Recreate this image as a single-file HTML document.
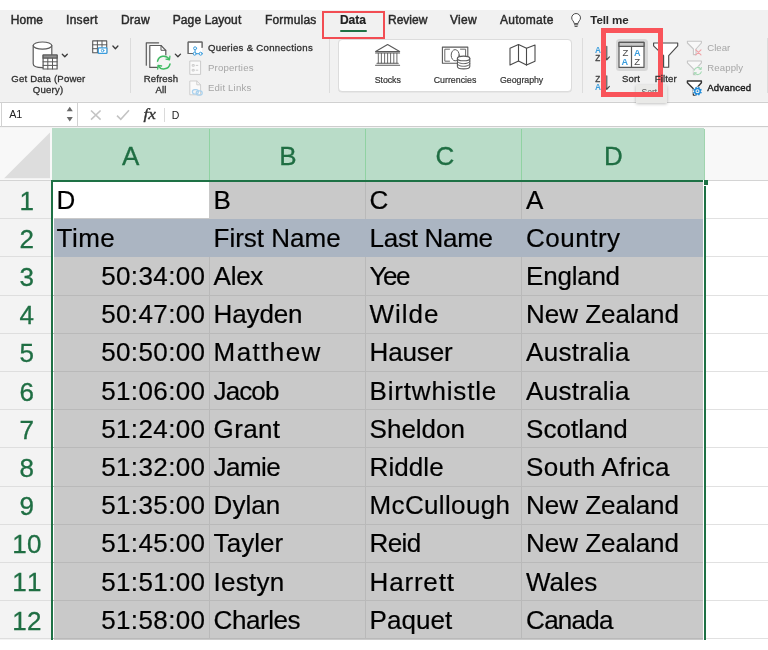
<!DOCTYPE html>
<html><head><meta charset="utf-8"><title>Excel Sort</title>
<style>
html,body{margin:0;padding:0;background:#fff;}
body{width:768px;height:650px;position:relative;overflow:hidden;font-family:"Liberation Sans",sans-serif;}
.t{position:absolute;white-space:nowrap;}
.a{position:absolute;}
svg{position:absolute;overflow:visible;}
</style></head><body><div id="wrap" style="position:absolute;left:0;top:0;width:768px;height:650px;will-change:transform;">
<!-- ribbon background -->
<div class="a" style="left:0;top:10px;width:768px;height:91.5px;background:#f1f1f1;"></div>
<!-- separators -->
<div class="a" style="left:130px;top:38px;width:1px;height:55px;background:#dcdcdc;"></div>
<div class="a" style="left:328.5px;top:38px;width:1px;height:55px;background:#dcdcdc;"></div>
<div class="a" style="left:582px;top:38px;width:1px;height:55px;background:#dcdcdc;"></div>
<div class="a" style="left:767px;top:38px;width:1px;height:55px;background:#dcdcdc;"></div>
<!-- data types panel -->
<div class="a" style="left:338.2px;top:39.2px;width:233.8px;height:52.8px;background:#fff;border:0.8px solid #dcdcdc;box-shadow:0 0.5px 0.6px rgba(0,0,0,.08);border-radius:4px;box-sizing:border-box;"></div>
<!-- data underline -->
<div class="a" style="left:340px;top:30px;width:27px;height:2.2px;background:#1e7145;border-radius:1px;"></div>
<!-- sort button bg -->
<div class="a" style="left:615.5px;top:38.7px;width:32.3px;height:32px;background:#d8d8d8;border-radius:3.5px;"></div>

<!--ICONS_START-->
<svg style="left:0;top:0" width="768" height="110" viewBox="0 0 768 110" fill="none" stroke-linejoin="round" stroke-linecap="round">
<!-- Get Data: cylinder + table -->
<g stroke="#5a5a5a" stroke-width="1.2">
 <path d="M33.2 45.6 V63.8 C33.2 66.2 37.3 67.6 42.5 67.6 C47.7 67.6 51.8 66.2 51.8 63.8 V45.6" fill="#fff"/>
 <ellipse cx="42.5" cy="45.6" rx="9.3" ry="3.6" fill="#fff"/>
 <rect x="43.1" y="55" width="14" height="14" fill="#fff"/>
 <rect x="43.1" y="55" width="14" height="3.2" fill="#8f8f8f"/>
 <path d="M43.1 61.8 H57.1 M43.1 65.4 H57.1 M47.8 58.2 V69 M52.5 58.2 V69" stroke-width="1"/>
</g>
<path d="M62.3 54.2 L64.8 56.8 L67.3 54.2" stroke="#3a3a3a" stroke-width="1.3"/>
<!-- table + camera -->
<g stroke="#5a5a5a" stroke-width="1.1">
 <rect x="92.7" y="40.9" width="14" height="11.8" fill="#fff"/>
 <path d="M92.7 44.8 H106.7 M92.7 48.7 H106.7 M97.4 40.9 V52.7 M102 40.9 V52.7" stroke-width="1"/>
</g>
<rect x="98.3" y="47.8" width="8.6" height="5.6" rx="0.6" fill="#fff" stroke="#3b9ddd" stroke-width="1.2"/>
<circle cx="102.6" cy="50.6" r="1.3" stroke="#3b9ddd" stroke-width="0.9"/>
<path d="M112.9 46 L115.4 48.7 L117.9 46" stroke="#3a3a3a" stroke-width="1.3"/>
<!-- Refresh all -->
<g stroke="#5a5a5a" stroke-width="1.2">
 <path d="M158.6 42.8 H146.3 V65.2"/>
 <path d="M149.8 45.5 H161 L165.8 50.3 V67.4 H149.8 Z" fill="#fff"/>
 <path d="M161 45.5 V50.3 H165.8" stroke-width="1"/>
</g>
<circle cx="163.8" cy="62.6" r="7.6" fill="#f4f4f4" stroke="none"/>
<g stroke="#3fbb63" stroke-width="1.5">
 <path d="M157.6 61.2 A6.3 6.3 0 0 1 169.2 59.4"/>
 <path d="M170 64 A6.3 6.3 0 0 1 158.4 65.8"/>
 <path d="M169.9 56.2 L169.5 59.8 L166 59.2" stroke-width="1.3"/>
 <path d="M157.7 69 L158.1 65.4 L161.6 66" stroke-width="1.3"/>
</g>
<path d="M175.3 54.1 L177.9 56.8 L180.5 54.1" stroke="#3a3a3a" stroke-width="1.3"/>
<!-- Queries & connections -->
<path d="M194 53.5 H188.2 V42.2 H202 V47" stroke="#666" stroke-width="1.2" fill="#fff"/>
<path d="M188.2 42.2 H202 V53 H188.2 Z" fill="#fff" stroke="none"/>
<path d="M192 53.5 H188.2 V42.2 H202 V47.5" stroke="#666" stroke-width="1.2"/>
<g stroke="#3b9ddd" stroke-width="1">
 <path d="M195.1 49.8 V52.2 M196.2 53.7 H199.2"/>
 <circle cx="195.1" cy="48.3" r="1.5" fill="#fff"/>
 <circle cx="194.7" cy="53.7" r="1.5" fill="#fff"/>
 <circle cx="200.7" cy="53.7" r="1.5" fill="#fff"/>
</g>
<!-- Properties -->
<g stroke="#cbcbcb" stroke-width="1">
 <rect x="190.2" y="61" width="10.4" height="13.4" fill="#fafafa"/>
 <rect x="192.6" y="64.6" width="1.6" height="1.6"/>
 <rect x="192.6" y="69.4" width="1.6" height="1.6"/>
 <path d="M196.2 65.4 H197.8 M196.2 70.2 H197.8"/>
</g>
<!-- Edit links -->
<g stroke="#cfcfcf" stroke-width="1">
 <path d="M190.2 81 H196.8 L200.6 84.8 V94.8 H190.2 Z" fill="#fafafa"/>
 <path d="M196.8 81 V84.8 H200.6"/>
</g>
<g stroke="#a9d1ee" stroke-width="1.2">
 <rect x="192.4" y="89.6" width="6" height="4.4" rx="2.2" fill="#f4f4f4"/>
 <rect x="196.2" y="90.8" width="6" height="4.4" rx="2.2"/>
</g>
<!-- Stocks (bank) -->
<g stroke="#5a5a5a" stroke-width="1.1">
 <path d="M375.6 51.6 L387.6 44.6 L399.6 51.6 Z" fill="#fff"/>
 <path d="M375.6 53 H399.6" />
 <path d="M378.3 53.4 V63 M381.4 53.4 V63 M384.6 53.4 V63 M387.6 53.4 V63 M390.6 53.4 V63 M393.8 53.4 V63 M396.9 53.4 V63" stroke-width="0.9"/>
 <path d="M377 63.2 H398.2 M375.6 65.3 H399.6"/>
</g>
<!-- Currencies -->
<g stroke="#5a5a5a" stroke-width="1.1">
 <rect x="442.4" y="47.1" width="25.4" height="16.2" fill="#fff"/>
 <path d="M449.5 49.2 H444.8 V61.2 H449.5 M460.5 49.2 H465.6 V56.5 M460.5 61.2 H458" stroke-width="0.9"/>
 <ellipse cx="455.2" cy="55.2" rx="4" ry="5.6" stroke-width="1"/>
 <path d="M457.4 58.4 V66.4 C457.4 67.8 460.2 68.9 463.6 68.9 C467 68.9 469.8 67.8 469.8 66.4 V58.4" fill="#fff"/>
 <ellipse cx="463.6" cy="58.4" rx="6.2" ry="2.3" fill="#fff"/>
 <path d="M457.4 61.1 C457.4 62.5 460.2 63.6 463.6 63.6 C467 63.6 469.8 62.5 469.8 61.1 M457.4 63.8 C457.4 65.2 460.2 66.3 463.6 66.3 C467 66.3 469.8 65.2 469.8 63.8" stroke-width="1"/>
</g>
<!-- Geography -->
<g stroke="#4a4a4a" stroke-width="1.1">
 <path d="M510 48.3 L518.5 44.5 L526.5 48.3 L535 45 V61.2 L526.5 65.1 L518.5 61 L510 65.1 Z" fill="#fff"/>
 <path d="M518.5 44.5 V61 M526.5 48.3 V65.1"/>
</g>
<!-- bulb -->
<g stroke="#4a4a4a" stroke-width="1">
 <path d="M574.2 23.2 C574 21.2 571.7 20.4 571.7 17.9 A4.4 4.4 0 0 1 580.5 17.9 C580.5 20.4 578.2 21.2 578 23.2 Z" fill="#fff"/>
 <path d="M574.4 24.8 H577.8 M575 26.4 H577.2"/>
</g>
<!-- AZ sort arrows -->
<g font-family="Liberation Sans, sans-serif" font-size="8.2" stroke="none">
 <text x="594.9" y="52.6" fill="#3b9ddd" font-weight="bold">A</text>
 <text x="595.3" y="60.8" fill="#444" stroke="#444" stroke-width="0.3">Z</text>
 <text x="595.3" y="81.7" fill="#444" stroke="#444" stroke-width="0.3">Z</text>
 <text x="594.9" y="89.6" fill="#3b9ddd" font-weight="bold">A</text>
</g>
<g stroke="#4a4a4a" stroke-width="1.1">
 <path d="M606.8 46.4 V59.6 M604.2 56.8 L606.8 59.8 L609.4 56.8"/>
 <path d="M606.8 75.8 V89.2 M604.2 86.4 L606.8 89.4 L609.4 86.4"/>
</g>
<!-- Sort icon -->
<g stroke="#5a5a5a" stroke-width="1.2">
 <rect x="619" y="42.4" width="25" height="25" fill="#fff"/>
 <rect x="619" y="42.4" width="25" height="4" fill="#c9c9c9"/>
 <path d="M631.5 46.4 V67.4"/>
</g>
<g font-family="Liberation Sans, sans-serif" font-size="9.6" stroke="none">
 <text x="622.4" y="55.7" fill="#4d4d4d">Z</text>
 <text x="634" y="55.7" fill="#3b9ddd" font-weight="bold" textLength="6.6" lengthAdjust="spacingAndGlyphs">A</text>
 <text x="621.4" y="64.9" fill="#3b9ddd" font-weight="bold" textLength="6.6" lengthAdjust="spacingAndGlyphs">A</text>
 <text x="634.3" y="64.9" fill="#4d4d4d">Z</text>
</g>
<!-- Filter funnel -->
<path d="M653.6 43 H677.7 V45.8 L668.7 55.6 V67.2 H663.6 V55.6 L653.6 45.8 Z" fill="#fff" stroke="#4a4a4a" stroke-width="1.15"/>
<!-- Clear -->
<path d="M687.4 41.2 H701.4 V43 L696 49 V54.6 H693.4 V49 L687.4 43 Z" fill="#f8f8f8" stroke="#c6c6c6" stroke-width="1.1"/>
<path d="M695.8 49.9 L701 54.8 M701 49.9 L695.8 54.8" stroke="#f1a1a6" stroke-width="1.1"/>
<!-- Reapply -->
<path d="M687.4 61 H701.4 V62.8 L696 68.8 V74.6 H693.4 V68.8 L687.4 62.8 Z" fill="#f8f8f8" stroke="#c6c6c6" stroke-width="1.1"/>
<circle cx="697.8" cy="71" r="4.4" fill="#f4f4f4" stroke="none"/>
<g stroke="#a4d9b3" stroke-width="1.1">
 <path d="M694.3 70.2 A3.6 3.6 0 0 1 700.9 69.2 M701.3 71.8 A3.6 3.6 0 0 1 694.7 72.8"/>
 <path d="M701.4 67.4 L701.1 69.5 L699 69.1 M694.2 74.6 L694.5 72.5 L696.6 72.9" stroke-width="0.9"/>
</g>
<!-- Advanced -->
<path d="M687.4 81 H701.4 V82.8 L696 88.8 V95 H693.4 V88.8 L687.4 82.8 Z" fill="#fff" stroke="#333" stroke-width="1.4"/>
<circle cx="697.5" cy="91.2" r="4.6" fill="#f4f4f4" stroke="none"/>
<g stroke="#1f8ad8" stroke-linecap="butt">
 <path d="M699.90 92.19 L701.57 92.88 M698.49 93.60 L699.18 95.27 M696.51 93.60 L695.82 95.27 M695.10 92.19 L693.43 92.88 M695.10 90.21 L693.43 89.52 M696.51 88.80 L695.82 87.13 M698.49 88.80 L699.18 87.13 M699.90 90.21 L701.57 89.52 " stroke-width="1.5"/>
 <circle cx="697.5" cy="91.2" r="2.7" stroke-width="1.3" fill="#f1f1f1"/>
 <circle cx="697.5" cy="91.2" r="0.9" fill="#1f8ad8" stroke="none"/>
</g>
</svg>

<!--ICONS_END-->

<!-- formula bar -->
<div class="a" style="left:0;top:101px;width:768px;height:27.5px;background:#f3f3f3;"></div>
<div class="a" style="left:0;top:101.6px;width:768px;height:25.8px;background:#fff;border-top:1.3px solid #d0d0d0;border-bottom:1.5px solid #cdcdcd;box-sizing:border-box;"></div>
<div class="a" style="left:76.5px;top:102px;width:1.4px;height:24.5px;background:#d2d2d2;"></div>
<div class="a" style="left:0.5px;top:102px;width:1px;height:24.5px;background:#d2d2d2;"></div>
<div class="a" style="left:164px;top:108px;width:1px;height:13.5px;background:#dadada;"></div>
<svg style="left:0;top:0" width="768" height="140" viewBox="0 0 768 140">
 <path d="M66.7 111.3 L69.75 106.7 L72.8 111.3 Z M66.7 116.9 L69.75 121.6 L72.8 116.9 Z" fill="#6a6a6a"/>
 <path d="M91 110.5 L100.6 119.6 M100.6 110.5 L91 119.6" stroke="#c4c4c4" stroke-width="1.6" fill="none"/>
 <path d="M117 115.6 L120.8 119.4 L129 110.3" stroke="#c4c4c4" stroke-width="1.6" fill="none"/>
 <text x="143.6" y="119.2" font-family="Liberation Serif,serif" font-style="italic" font-size="14.5" fill="#333" stroke="#333" stroke-width="0.35" textLength="12.4" lengthAdjust="spacingAndGlyphs">fx</text>
</svg>
<!-- tooltip -->
<div class="a" style="left:635.5px;top:85px;width:31.3px;height:17.5px;background:#e9e9e7;box-shadow:0 1px 3px rgba(0,0,0,.25);"></div>
<div class="t" style="left:641.5px;top:87px;font-size:8.5px;line-height:10px;color:#555;width:25px;overflow:hidden;">Sort</div>
<!-- red boxes -->
<div class="a" style="left:322.3px;top:10.8px;width:62.7px;height:27.8px;border:2.2px solid #f24d53;box-sizing:border-box;"></div>
<div class="a" style="left:600.8px;top:27.5px;width:62px;height:69.5px;border:5.2px solid #f9545a;box-sizing:border-box;"></div>

<div class="t" style="left:10.80px;top:14.04px;font-size:12px;line-height:12px;letter-spacing:0.053px;color:#2a2a2a;-webkit-text-stroke:0.45px #2a2a2a;">Home</div>
<div class="t" style="left:66.00px;top:14.04px;font-size:12px;line-height:12px;letter-spacing:0.300px;color:#2a2a2a;-webkit-text-stroke:0.45px #2a2a2a;">Insert</div>
<div class="t" style="left:121.00px;top:14.04px;font-size:12px;line-height:12px;letter-spacing:0.207px;color:#2a2a2a;-webkit-text-stroke:0.45px #2a2a2a;">Draw</div>
<div class="t" style="left:172.70px;top:14.04px;font-size:12px;line-height:12px;letter-spacing:0.116px;color:#2a2a2a;-webkit-text-stroke:0.45px #2a2a2a;">Page Layout</div>
<div class="t" style="left:265.00px;top:14.04px;font-size:12px;line-height:12px;letter-spacing:0.180px;color:#2a2a2a;-webkit-text-stroke:0.45px #2a2a2a;">Formulas</div>
<div class="t" style="left:388.00px;top:14.04px;font-size:12px;line-height:12px;letter-spacing:0.004px;color:#2a2a2a;-webkit-text-stroke:0.45px #2a2a2a;">Review</div>
<div class="t" style="left:450.00px;top:14.04px;font-size:12px;line-height:12px;letter-spacing:0.260px;color:#2a2a2a;-webkit-text-stroke:0.45px #2a2a2a;">View</div>
<div class="t" style="left:500.00px;top:14.04px;font-size:12px;line-height:12px;letter-spacing:0.277px;color:#2a2a2a;-webkit-text-stroke:0.45px #2a2a2a;">Automate</div>
<div class="t" style="left:590.30px;top:14.38px;font-size:11.6px;line-height:11.6px;letter-spacing:-0.115px;color:#2a2a2a;font-weight:bold;">Tell me</div>
<div class="t" style="left:340.00px;top:14.04px;font-size:12px;line-height:12px;letter-spacing:-0.053px;color:#222;font-weight:bold;-webkit-text-stroke:0.2px #222;">Data</div>
<div class="t" style="left:11.30px;top:74.47px;font-size:9.6px;line-height:9.6px;letter-spacing:0.177px;color:#303030;-webkit-text-stroke:0.3px #303030;">Get Data (Power</div>
<div class="t" style="left:32.80px;top:85.27px;font-size:9.6px;line-height:9.6px;letter-spacing:0.225px;color:#303030;-webkit-text-stroke:0.3px #303030;">Query)</div>
<div class="t" style="left:143.80px;top:74.37px;font-size:9.6px;line-height:9.6px;letter-spacing:0.100px;color:#303030;-webkit-text-stroke:0.3px #303030;">Refresh</div>
<div class="t" style="left:155.50px;top:85.17px;font-size:9.6px;line-height:9.6px;letter-spacing:0.072px;color:#303030;-webkit-text-stroke:0.3px #303030;">All</div>
<div class="t" style="left:208.00px;top:43.17px;font-size:9.6px;line-height:9.6px;letter-spacing:0.301px;color:#303030;-webkit-text-stroke:0.3px #303030;">Queries &amp; Connections</div>
<div class="t" style="left:208.00px;top:63.27px;font-size:9.6px;line-height:9.6px;letter-spacing:0.192px;color:#a6a6a6;">Properties</div>
<div class="t" style="left:208.00px;top:83.47px;font-size:9.6px;line-height:9.6px;letter-spacing:0.182px;color:#a6a6a6;">Edit Links</div>
<div class="t" style="left:374.70px;top:75.85px;font-size:8.8px;line-height:8.8px;letter-spacing:-0.060px;color:#333;-webkit-text-stroke:0.2px #333;">Stocks</div>
<div class="t" style="left:433.70px;top:75.85px;font-size:8.8px;line-height:8.8px;letter-spacing:0.011px;color:#333;-webkit-text-stroke:0.2px #333;">Currencies</div>
<div class="t" style="left:500.00px;top:75.85px;font-size:8.8px;line-height:8.8px;letter-spacing:-0.033px;color:#333;-webkit-text-stroke:0.2px #333;">Geography</div>
<div class="t" style="left:621.90px;top:74.37px;font-size:9.6px;line-height:9.6px;letter-spacing:0.179px;color:#303030;-webkit-text-stroke:0.3px #303030;">Sort</div>
<div class="t" style="left:654.70px;top:74.37px;font-size:9.6px;line-height:9.6px;letter-spacing:0.118px;color:#303030;-webkit-text-stroke:0.3px #303030;">Filter</div>
<div class="t" style="left:707.30px;top:43.27px;font-size:9.6px;line-height:9.6px;letter-spacing:-0.011px;color:#a6a6a6;">Clear</div>
<div class="t" style="left:707.30px;top:63.17px;font-size:9.6px;line-height:9.6px;letter-spacing:0.111px;color:#a6a6a6;">Reapply</div>
<div class="t" style="left:707.30px;top:82.97px;font-size:9.6px;line-height:9.6px;letter-spacing:0.169px;color:#1a1a1a;-webkit-text-stroke:0.4px #1a1a1a;">Advanced</div>
<div class="t" style="left:9.20px;top:108.86px;font-size:10.8px;line-height:10.8px;letter-spacing:-0.176px;color:#222;">A1</div>
<div class="t" style="left:171.70px;top:109.71px;font-size:10.5px;line-height:10.5px;letter-spacing:0.000px;color:#222;">D</div>

<!-- grid -->
<!-- header row area -->
<div class="a" style="left:0;top:128.2px;width:768px;height:52px;background:#f8f8f8;"></div>
<div class="a" style="left:0;top:179.8px;width:768px;height:1.2px;background:#d4d4d4;"></div>
<div class="a" style="left:52px;top:128.2px;width:652.3px;height:51.8px;background:#b9dcc8;"></div>
<div class="a" style="left:208.5px;top:128.5px;width:1px;height:52px;background:#90d2a2;"></div>
<div class="a" style="left:364.8px;top:128.5px;width:1px;height:52px;background:#90d2a2;"></div>
<div class="a" style="left:521px;top:128.5px;width:1px;height:52px;background:#90d2a2;"></div>
<div class="a" style="left:703.5px;top:128.5px;width:1px;height:52px;background:#a0d4ae;"></div>
<svg style="left:0;top:0" width="60" height="190" viewBox="0 0 60 190"><path d="M50 132.5 L50 178.3 L4.2 178.3 Z" fill="#dddddd"/></svg>
<!-- row header col -->
<div class="a" style="left:0;top:181px;width:51.5px;height:458.6px;background:#f3f3f3;"></div>
<!-- selected area -->
<div class="a" style="left:54px;top:181.5px;width:648.8px;height:458.1px;background:#c9c9c9;"></div>
<!-- row 2 -->
<div class="a" style="left:54px;top:219px;width:648.8px;height:38.4px;background:#abb5c2;"></div>
<!-- A1 white -->
<div class="a" style="left:53px;top:182px;width:156px;height:36.4px;background:#fff;"></div>
<!--GL_START-->
<div class="a" style="left:0;top:218.19px;width:51.3px;height:1px;background:#dedede;"></div>
<div class="a" style="left:706px;top:218.19px;width:62px;height:1px;background:#e1e1e1;"></div>
<div class="a" style="left:0;top:256.38px;width:51.3px;height:1px;background:#dedede;"></div>
<div class="a" style="left:706px;top:256.38px;width:62px;height:1px;background:#e1e1e1;"></div>
<div class="a" style="left:0;top:294.57px;width:51.3px;height:1px;background:#dedede;"></div>
<div class="a" style="left:706px;top:294.57px;width:62px;height:1px;background:#e1e1e1;"></div>
<div class="a" style="left:53px;top:294.57px;width:650px;height:1px;background:#b9b9b9;"></div>
<div class="a" style="left:0;top:332.76px;width:51.3px;height:1px;background:#dedede;"></div>
<div class="a" style="left:706px;top:332.76px;width:62px;height:1px;background:#e1e1e1;"></div>
<div class="a" style="left:53px;top:332.76px;width:650px;height:1px;background:#b9b9b9;"></div>
<div class="a" style="left:0;top:370.95px;width:51.3px;height:1px;background:#dedede;"></div>
<div class="a" style="left:706px;top:370.95px;width:62px;height:1px;background:#e1e1e1;"></div>
<div class="a" style="left:53px;top:370.95px;width:650px;height:1px;background:#b9b9b9;"></div>
<div class="a" style="left:0;top:409.14px;width:51.3px;height:1px;background:#dedede;"></div>
<div class="a" style="left:706px;top:409.14px;width:62px;height:1px;background:#e1e1e1;"></div>
<div class="a" style="left:53px;top:409.14px;width:650px;height:1px;background:#b9b9b9;"></div>
<div class="a" style="left:0;top:447.33px;width:51.3px;height:1px;background:#dedede;"></div>
<div class="a" style="left:706px;top:447.33px;width:62px;height:1px;background:#e1e1e1;"></div>
<div class="a" style="left:53px;top:447.33px;width:650px;height:1px;background:#b9b9b9;"></div>
<div class="a" style="left:0;top:485.52px;width:51.3px;height:1px;background:#dedede;"></div>
<div class="a" style="left:706px;top:485.52px;width:62px;height:1px;background:#e1e1e1;"></div>
<div class="a" style="left:53px;top:485.52px;width:650px;height:1px;background:#b9b9b9;"></div>
<div class="a" style="left:0;top:523.71px;width:51.3px;height:1px;background:#dedede;"></div>
<div class="a" style="left:706px;top:523.71px;width:62px;height:1px;background:#e1e1e1;"></div>
<div class="a" style="left:53px;top:523.71px;width:650px;height:1px;background:#b9b9b9;"></div>
<div class="a" style="left:0;top:561.90px;width:51.3px;height:1px;background:#dedede;"></div>
<div class="a" style="left:706px;top:561.90px;width:62px;height:1px;background:#e1e1e1;"></div>
<div class="a" style="left:53px;top:561.90px;width:650px;height:1px;background:#b9b9b9;"></div>
<div class="a" style="left:0;top:600.09px;width:51.3px;height:1px;background:#dedede;"></div>
<div class="a" style="left:706px;top:600.09px;width:62px;height:1px;background:#e1e1e1;"></div>
<div class="a" style="left:53px;top:600.09px;width:650px;height:1px;background:#b9b9b9;"></div>
<div class="a" style="left:0;top:638.28px;width:51.3px;height:1px;background:#dedede;"></div>
<div class="a" style="left:706px;top:638.28px;width:62px;height:1px;background:#e1e1e1;"></div>
<div class="a" style="left:53px;top:638.28px;width:650px;height:1px;background:#b9b9b9;"></div>
<div class="a" style="left:208.5px;top:257.2px;width:1px;height:382px;background:#b9b9b9;"></div>
<div class="a" style="left:364.8px;top:257.2px;width:1px;height:382px;background:#b9b9b9;"></div>
<div class="a" style="left:364.8px;top:182px;width:1px;height:36.5px;background:#b9b9b9;"></div>
<div class="a" style="left:521px;top:257.2px;width:1px;height:382px;background:#b9b9b9;"></div>
<div class="a" style="left:521px;top:182px;width:1px;height:36.5px;background:#b9b9b9;"></div>
<!--GL_END-->
<!-- selection border -->
<div class="a" style="left:51.3px;top:180px;width:1.9px;height:460px;background:#1e7145;"></div>
<div class="a" style="left:51.3px;top:180px;width:653px;height:1.8px;background:#1e7145;"></div>
<div class="a" style="left:703.9px;top:181px;width:1.9px;height:459px;background:#1e7145;"></div>
<div class="a" style="left:702.8px;top:179.8px;width:4px;height:4.8px;background:#1e7145;border-left:0.7px solid #fff;border-bottom:0.7px solid #fff;"></div>

<div class="t" style="left:56.60px;top:186.68px;font-size:26px;line-height:26px;letter-spacing:0.000px;color:#000;-webkit-text-stroke:0.2px #000;">D</div>
<div class="t" style="left:213.60px;top:186.68px;font-size:26px;line-height:26px;letter-spacing:0.000px;color:#000;-webkit-text-stroke:0.2px #000;">B</div>
<div class="t" style="left:369.60px;top:186.68px;font-size:26px;line-height:26px;letter-spacing:0.000px;color:#000;-webkit-text-stroke:0.2px #000;">C</div>
<div class="t" style="left:526.10px;top:186.68px;font-size:26px;line-height:26px;letter-spacing:0.000px;color:#000;-webkit-text-stroke:0.2px #000;">A</div>
<div class="t" style="left:19.41px;top:187.58px;font-size:26px;line-height:26px;letter-spacing:0.000px;color:#1f6e43;-webkit-text-stroke:0.3px #1f6e43;">1</div>
<div class="t" style="left:56.60px;top:224.87px;font-size:26px;line-height:26px;letter-spacing:0.450px;color:#000;-webkit-text-stroke:0.2px #000;">Time</div>
<div class="t" style="left:213.60px;top:224.87px;font-size:26px;line-height:26px;letter-spacing:-0.013px;color:#000;-webkit-text-stroke:0.2px #000;">First Name</div>
<div class="t" style="left:369.60px;top:224.87px;font-size:26px;line-height:26px;letter-spacing:-0.287px;color:#000;-webkit-text-stroke:0.2px #000;">Last Name</div>
<div class="t" style="left:526.10px;top:224.87px;font-size:26px;line-height:26px;letter-spacing:0.493px;color:#000;-webkit-text-stroke:0.2px #000;">Country</div>
<div class="t" style="left:19.41px;top:225.77px;font-size:26px;line-height:26px;letter-spacing:0.000px;color:#1f6e43;-webkit-text-stroke:0.3px #1f6e43;">2</div>
<div class="t" style="left:101.18px;top:263.06px;font-size:26px;line-height:26px;letter-spacing:0.383px;color:#000;-webkit-text-stroke:0.2px #000;">50:34:00</div>
<div class="t" style="left:213.60px;top:263.06px;font-size:26px;line-height:26px;letter-spacing:-0.273px;color:#000;-webkit-text-stroke:0.2px #000;">Alex</div>
<div class="t" style="left:369.60px;top:263.06px;font-size:26px;line-height:26px;letter-spacing:-1.525px;color:#000;-webkit-text-stroke:0.2px #000;">Yee</div>
<div class="t" style="left:526.10px;top:263.06px;font-size:26px;line-height:26px;letter-spacing:-0.243px;color:#000;-webkit-text-stroke:0.2px #000;">England</div>
<div class="t" style="left:19.41px;top:263.96px;font-size:26px;line-height:26px;letter-spacing:0.000px;color:#1f6e43;-webkit-text-stroke:0.3px #1f6e43;">3</div>
<div class="t" style="left:101.18px;top:301.25px;font-size:26px;line-height:26px;letter-spacing:0.383px;color:#000;-webkit-text-stroke:0.2px #000;">50:47:00</div>
<div class="t" style="left:213.60px;top:301.25px;font-size:26px;line-height:26px;letter-spacing:-0.134px;color:#000;-webkit-text-stroke:0.2px #000;">Hayden</div>
<div class="t" style="left:369.60px;top:301.25px;font-size:26px;line-height:26px;letter-spacing:0.933px;color:#000;-webkit-text-stroke:0.2px #000;">Wilde</div>
<div class="t" style="left:526.10px;top:301.25px;font-size:26px;line-height:26px;letter-spacing:-0.031px;color:#000;-webkit-text-stroke:0.2px #000;">New Zealand</div>
<div class="t" style="left:19.41px;top:302.15px;font-size:26px;line-height:26px;letter-spacing:0.000px;color:#1f6e43;-webkit-text-stroke:0.3px #1f6e43;">4</div>
<div class="t" style="left:101.18px;top:339.44px;font-size:26px;line-height:26px;letter-spacing:0.383px;color:#000;-webkit-text-stroke:0.2px #000;">50:50:00</div>
<div class="t" style="left:213.60px;top:339.44px;font-size:26px;line-height:26px;letter-spacing:1.412px;color:#000;-webkit-text-stroke:0.2px #000;">Matthew</div>
<div class="t" style="left:369.60px;top:339.44px;font-size:26px;line-height:26px;letter-spacing:-0.156px;color:#000;-webkit-text-stroke:0.2px #000;">Hauser</div>
<div class="t" style="left:526.10px;top:339.44px;font-size:26px;line-height:26px;letter-spacing:0.263px;color:#000;-webkit-text-stroke:0.2px #000;">Australia</div>
<div class="t" style="left:19.41px;top:340.34px;font-size:26px;line-height:26px;letter-spacing:0.000px;color:#1f6e43;-webkit-text-stroke:0.3px #1f6e43;">5</div>
<div class="t" style="left:101.18px;top:377.63px;font-size:26px;line-height:26px;letter-spacing:0.383px;color:#000;-webkit-text-stroke:0.2px #000;">51:06:00</div>
<div class="t" style="left:213.60px;top:377.63px;font-size:26px;line-height:26px;letter-spacing:-0.897px;color:#000;-webkit-text-stroke:0.2px #000;">Jacob</div>
<div class="t" style="left:369.60px;top:377.63px;font-size:26px;line-height:26px;letter-spacing:0.817px;color:#000;-webkit-text-stroke:0.2px #000;">Birtwhistle</div>
<div class="t" style="left:526.10px;top:377.63px;font-size:26px;line-height:26px;letter-spacing:0.263px;color:#000;-webkit-text-stroke:0.2px #000;">Australia</div>
<div class="t" style="left:19.41px;top:378.53px;font-size:26px;line-height:26px;letter-spacing:0.000px;color:#1f6e43;-webkit-text-stroke:0.3px #1f6e43;">6</div>
<div class="t" style="left:101.18px;top:415.82px;font-size:26px;line-height:26px;letter-spacing:0.383px;color:#000;-webkit-text-stroke:0.2px #000;">51:24:00</div>
<div class="t" style="left:213.60px;top:415.82px;font-size:26px;line-height:26px;letter-spacing:0.352px;color:#000;-webkit-text-stroke:0.2px #000;">Grant</div>
<div class="t" style="left:369.60px;top:415.82px;font-size:26px;line-height:26px;letter-spacing:-0.002px;color:#000;-webkit-text-stroke:0.2px #000;">Sheldon</div>
<div class="t" style="left:526.10px;top:415.82px;font-size:26px;line-height:26px;letter-spacing:0.051px;color:#000;-webkit-text-stroke:0.2px #000;">Scotland</div>
<div class="t" style="left:19.41px;top:416.72px;font-size:26px;line-height:26px;letter-spacing:0.000px;color:#1f6e43;-webkit-text-stroke:0.3px #1f6e43;">7</div>
<div class="t" style="left:101.18px;top:454.01px;font-size:26px;line-height:26px;letter-spacing:0.383px;color:#000;-webkit-text-stroke:0.2px #000;">51:32:00</div>
<div class="t" style="left:213.60px;top:454.01px;font-size:26px;line-height:26px;letter-spacing:-0.535px;color:#000;-webkit-text-stroke:0.2px #000;">Jamie</div>
<div class="t" style="left:369.60px;top:454.01px;font-size:26px;line-height:26px;letter-spacing:0.074px;color:#000;-webkit-text-stroke:0.2px #000;">Riddle</div>
<div class="t" style="left:526.10px;top:454.01px;font-size:26px;line-height:26px;letter-spacing:0.286px;color:#000;-webkit-text-stroke:0.2px #000;">South Africa</div>
<div class="t" style="left:19.41px;top:454.91px;font-size:26px;line-height:26px;letter-spacing:0.000px;color:#1f6e43;-webkit-text-stroke:0.3px #1f6e43;">8</div>
<div class="t" style="left:101.18px;top:492.20px;font-size:26px;line-height:26px;letter-spacing:0.383px;color:#000;-webkit-text-stroke:0.2px #000;">51:35:00</div>
<div class="t" style="left:213.60px;top:492.20px;font-size:26px;line-height:26px;letter-spacing:0.035px;color:#000;-webkit-text-stroke:0.2px #000;">Dylan</div>
<div class="t" style="left:369.60px;top:492.20px;font-size:26px;line-height:26px;letter-spacing:0.342px;color:#000;-webkit-text-stroke:0.2px #000;">McCullough</div>
<div class="t" style="left:526.10px;top:492.20px;font-size:26px;line-height:26px;letter-spacing:-0.031px;color:#000;-webkit-text-stroke:0.2px #000;">New Zealand</div>
<div class="t" style="left:19.41px;top:493.10px;font-size:26px;line-height:26px;letter-spacing:0.000px;color:#1f6e43;-webkit-text-stroke:0.3px #1f6e43;">9</div>
<div class="t" style="left:101.18px;top:530.39px;font-size:26px;line-height:26px;letter-spacing:0.383px;color:#000;-webkit-text-stroke:0.2px #000;">51:45:00</div>
<div class="t" style="left:213.60px;top:530.39px;font-size:26px;line-height:26px;letter-spacing:0.036px;color:#000;-webkit-text-stroke:0.2px #000;">Tayler</div>
<div class="t" style="left:369.60px;top:530.39px;font-size:26px;line-height:26px;letter-spacing:-0.647px;color:#000;-webkit-text-stroke:0.2px #000;">Reid</div>
<div class="t" style="left:526.10px;top:530.39px;font-size:26px;line-height:26px;letter-spacing:-0.031px;color:#000;-webkit-text-stroke:0.2px #000;">New Zealand</div>
<div class="t" style="left:12.16px;top:531.29px;font-size:26px;line-height:26px;letter-spacing:0.430px;color:#1f6e43;-webkit-text-stroke:0.3px #1f6e43;">10</div>
<div class="t" style="left:101.18px;top:568.58px;font-size:26px;line-height:26px;letter-spacing:0.383px;color:#000;-webkit-text-stroke:0.2px #000;">51:51:00</div>
<div class="t" style="left:213.60px;top:568.58px;font-size:26px;line-height:26px;letter-spacing:0.268px;color:#000;-webkit-text-stroke:0.2px #000;">Iestyn</div>
<div class="t" style="left:369.60px;top:568.58px;font-size:26px;line-height:26px;letter-spacing:0.805px;color:#000;-webkit-text-stroke:0.2px #000;">Harrett</div>
<div class="t" style="left:526.10px;top:568.58px;font-size:26px;line-height:26px;letter-spacing:-0.048px;color:#000;-webkit-text-stroke:0.2px #000;">Wales</div>
<div class="t" style="left:12.16px;top:569.48px;font-size:26px;line-height:26px;letter-spacing:2.250px;color:#1f6e43;-webkit-text-stroke:0.3px #1f6e43;">11</div>
<div class="t" style="left:101.18px;top:606.77px;font-size:26px;line-height:26px;letter-spacing:0.383px;color:#000;-webkit-text-stroke:0.2px #000;">51:58:00</div>
<div class="t" style="left:213.60px;top:606.77px;font-size:26px;line-height:26px;letter-spacing:-0.450px;color:#000;-webkit-text-stroke:0.2px #000;">Charles</div>
<div class="t" style="left:369.60px;top:606.77px;font-size:26px;line-height:26px;letter-spacing:0.046px;color:#000;-webkit-text-stroke:0.2px #000;">Paquet</div>
<div class="t" style="left:526.10px;top:606.77px;font-size:26px;line-height:26px;letter-spacing:-0.736px;color:#000;-webkit-text-stroke:0.2px #000;">Canada</div>
<div class="t" style="left:12.16px;top:607.67px;font-size:26px;line-height:26px;letter-spacing:0.430px;color:#1f6e43;-webkit-text-stroke:0.3px #1f6e43;">12</div>
<div class="t" style="left:122.09px;top:143.39px;font-size:26px;line-height:26px;letter-spacing:0.000px;color:#1f6e43;-webkit-text-stroke:0.3px #1f6e43;">A</div>
<div class="t" style="left:279.17px;top:143.39px;font-size:26px;line-height:26px;letter-spacing:0.000px;color:#1f6e43;-webkit-text-stroke:0.3px #1f6e43;">B</div>
<div class="t" style="left:435.56px;top:143.39px;font-size:26px;line-height:26px;letter-spacing:0.000px;color:#1f6e43;-webkit-text-stroke:0.3px #1f6e43;">C</div>
<div class="t" style="left:604.01px;top:143.39px;font-size:26px;line-height:26px;letter-spacing:0.000px;color:#1f6e43;-webkit-text-stroke:0.3px #1f6e43;">D</div>
</div></body></html>
